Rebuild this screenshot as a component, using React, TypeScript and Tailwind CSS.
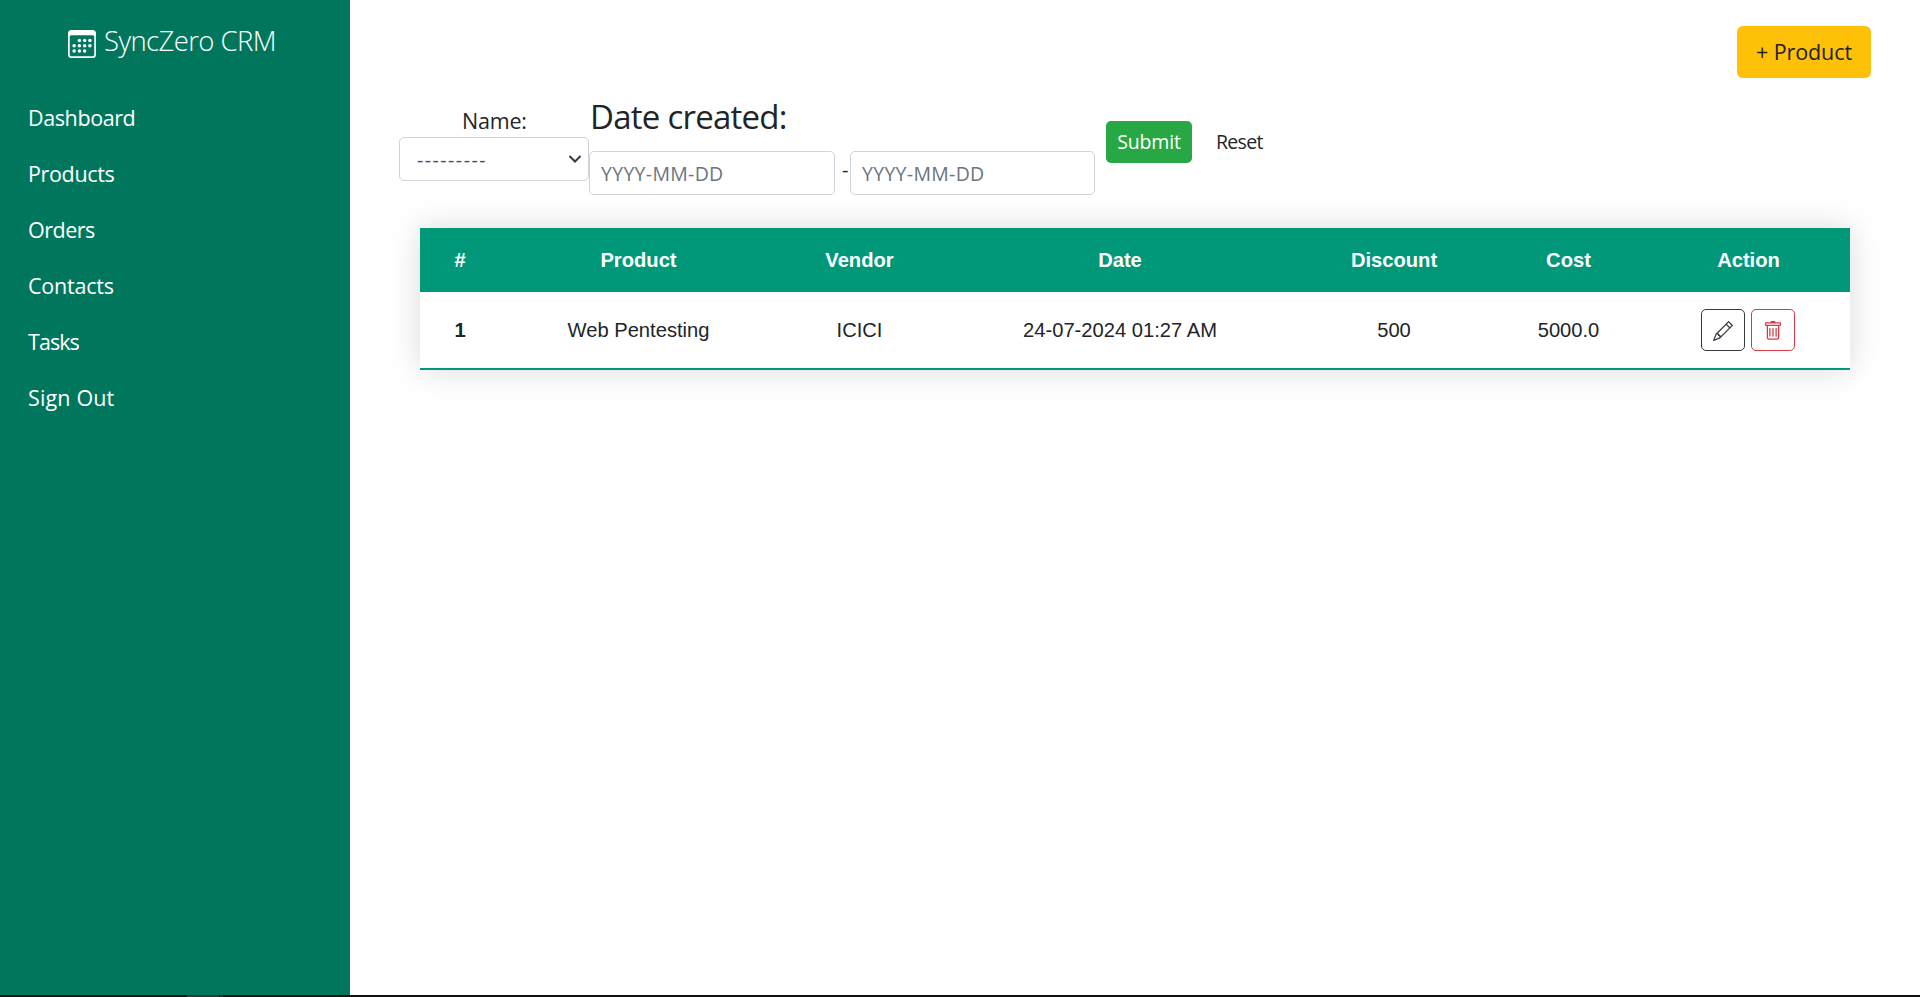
import { BsPencil, BsTrash } from "react-icons/bs";

const links = [
  { label: "Dashboard", tracking: "tracking-[-0.4px]" },
  { label: "Products", tracking: "tracking-[-0.35px]" },
  { label: "Orders", tracking: "tracking-[-0.5px]" },
  { label: "Contacts", tracking: "tracking-[-0.2px]" },
  { label: "Tasks", tracking: "tracking-[-0.95px]" },
  { label: "Sign Out", tracking: "tracking-[0.15px]" },
];

const columns = ["#", "Product", "Vendor", "Date", "Discount", "Cost", "Action"];
const cells = ["Web Pentesting", "ICICI", "24-07-2024 01:27 AM", "500", "5000.0"];

const calendarDots = [
  [6.5, 6], [9.5, 6], [12.5, 6],
  [3.5, 9], [6.5, 9], [9.5, 9], [12.5, 9],
  [3.5, 12], [6.5, 12], [9.5, 12],
];

function CalendarIcon() {
  return (
    <svg viewBox="0 0 16 16" className="mt-1 size-7" fill="currentColor">
      <path fillRule="evenodd" d="M14 0H2a2 2 0 0 0-2 2v12a2 2 0 0 0 2 2h12a2 2 0 0 0 2-2V2a2 2 0 0 0-2-2zM1 3.857C1 3.384 1.448 3 2 3h12c.552 0 1 .384 1 .857v10.286c0 .473-.448.857-1 .857H2c-.552 0-1-.384-1-.857V3.857z" />
      {calendarDots.map(([cx, cy]) => (
        <circle key={`${cx}-${cy}`} cx={cx} cy={cy} r="1" />
      ))}
    </svg>
  );
}

function Sidebar() {
  return (
    <aside className="w-[350px] shrink-0 bg-[#00775d] text-white">
      <div className="flex h-[70px] items-start pt-[26px] pl-[68px]">
        <CalendarIcon />
        <span className="-mt-[3px] ml-2 text-[27.5px] leading-9 font-light tracking-[-0.6px] whitespace-nowrap">
          SyncZero CRM
        </span>
      </div>
      <nav className="mt-5 flex flex-col">
        {links.map((link) => (
          <a key={link.label} href="#" className={`h-14 pl-7 text-[21.5px] leading-[56px] ${link.tracking}`}>
            {link.label}
          </a>
        ))}
      </nav>
    </aside>
  );
}

function DateInput({ width }: { width: string }) {
  return (
    <input
      type="text"
      placeholder="YYYY-MM-DD"
      className={`h-11 rounded-[5px] border border-[#ced4da] px-[11px] text-[19.5px] tracking-[0.3px] placeholder:text-[#6c757d] ${width}`}
    />
  );
}

function Filters() {
  return (
    <form className="mt-[18px] flex h-[99px] pl-[49px]">
      <div className="flex w-[190px] flex-col pt-[9px]">
        <label className="h-8 pl-[63px] text-[21.5px] leading-8 tracking-[-0.2px]">Name:</label>
        <div className="flex h-11 items-center justify-between rounded-[5px] border border-[#ced4da] pr-[6px] pl-[17px] text-[19.5px] text-[#495057]">
          <span className="pt-0.5 tracking-[1.5px]">---------</span>
          <svg viewBox="0 0 14 8" className="h-2 w-3.5" fill="none" stroke="#343a40" strokeWidth="2">
            <path d="M1.5 1 7 6.5 12.5 1" />
          </svg>
        </div>
      </div>
      <div className="flex flex-col">
        <h4 className="h-[55px] pl-px text-[33px] leading-[42px] tracking-[-0.75px]">Date created:</h4>
        <div className="flex items-center">
          <DateInput width="w-[246px]" />
          <span className="w-[15px] pb-1.5 pl-[7px] text-[20px]">-</span>
          <DateInput width="w-[245px]" />
        </div>
      </div>
      <button type="button" className="mt-[25px] ml-[11px] h-[42px] w-[86px] rounded-[5px] bg-[#28a745] text-[19.5px] tracking-[-0.2px] text-white">
        Submit
      </button>
      <a href="#" className="mt-[25px] ml-6 text-[19.5px] leading-[42px] tracking-[-0.7px]">
        Reset
      </a>
    </form>
  );
}

function ProductTable() {
  return (
    <table className="mt-[33px] ml-[70px] w-[1430px] table-fixed border-collapse font-['Liberation_Sans',Arial,sans-serif] text-[20.16px] shadow-[0_0_30px_rgba(0,0,0,0.15)]">
      <colgroup>
        <col className="w-[80px]" />
        <col className="w-[277px]" />
        <col className="w-[165px]" />
        <col className="w-[356px]" />
        <col className="w-[192px]" />
        <col className="w-[157px]" />
        <col className="w-[203px]" />
      </colgroup>
      <thead>
        <tr className="h-16 bg-[#009879] text-white">
          {columns.map((name) => (
            <th key={name} className="p-0 text-center font-bold">{name}</th>
          ))}
        </tr>
      </thead>
      <tbody>
        <tr className="h-[77px] border-b-2 border-[#009879] bg-white">
          <th className="p-0 text-center font-bold">1</th>
          {cells.map((cell) => (
            <td key={cell} className="p-0 text-center">{cell}</td>
          ))}
          <td className="p-0">
            <div className="flex gap-1.5 pl-[54px]">
              <button type="button" className="flex h-[42px] w-11 items-center justify-center rounded-[5px] border border-[#343a40] pt-0.5 text-[#343a40]">
                <BsPencil className="size-5" />
              </button>
              <button type="button" className="flex h-[42px] w-11 items-center justify-center rounded-[5px] border border-[#dc3545] pt-0.5 text-[#dc3545]">
                <BsTrash className="size-5" />
              </button>
            </div>
          </td>
        </tr>
      </tbody>
    </table>
  );
}

export default function App() {
  return (
    <div className="flex h-[997px] w-[1920px] flex-col overflow-hidden bg-white font-['Open_Sans','Noto_Sans',sans-serif] text-[#212529]">
      <div className="flex h-[995px]">
        <Sidebar />
        <main className="w-[1570px]">
          <div className="flex justify-end pt-[26px] pr-[49px]">
            <button type="button" className="h-[52px] w-[134px] rounded-[6px] bg-[#ffc107] text-[21.5px] tracking-[-0.1px] whitespace-nowrap">
              + Product
            </button>
          </div>
          <Filters />
          <ProductTable />
        </main>
      </div>
      <div className="flex h-0.5 bg-[#111111] pl-[187px]">
        <div className="w-8 bg-[#333333]" />
        <div className="ml-px w-[3px] bg-[#2a2a2a]" />
      </div>
    </div>
  );
}
